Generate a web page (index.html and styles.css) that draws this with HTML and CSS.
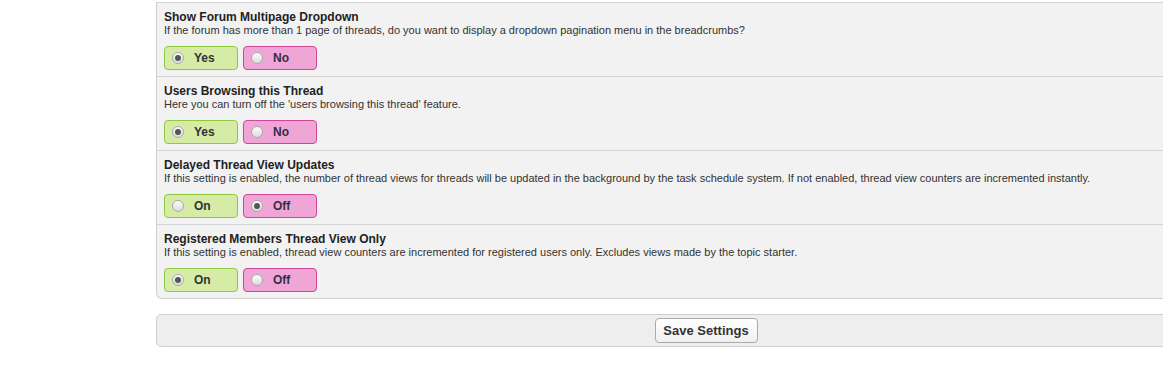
FILE: index.html
```html
<!DOCTYPE html>
<html lang="en">
<head>
    <meta charset="UTF-8">
    <title>Thread Settings</title>
    <link rel="stylesheet" href="styles.css">
</head>
<body>
<div class="page">
    <div class="settings">
        <div class="setting">
            <div class="title">Show Forum Multipage Dropdown</div>
            <div class="desc">If the forum has more than 1 page of threads, do you want to display a dropdown pagination menu in the breadcrumbs?</div>
            <div class="choices">
                <label class="choice yes"><span class="radio checked"></span>Yes</label>
                <label class="choice no"><span class="radio"></span>No</label>
            </div>
        </div>
        <div class="setting">
            <div class="title">Users Browsing this Thread</div>
            <div class="desc">Here you can turn off the 'users browsing this thread' feature.</div>
            <div class="choices">
                <label class="choice yes"><span class="radio checked"></span>Yes</label>
                <label class="choice no"><span class="radio"></span>No</label>
            </div>
        </div>
        <div class="setting">
            <div class="title">Delayed Thread View Updates</div>
            <div class="desc">If this setting is enabled, the number of thread views for threads will be updated in the background by the task schedule system. If not enabled, thread view counters are incremented instantly.</div>
            <div class="choices">
                <label class="choice yes"><span class="radio"></span>On</label>
                <label class="choice no"><span class="radio checked"></span>Off</label>
            </div>
        </div>
        <div class="setting">
            <div class="title">Registered Members Thread View Only</div>
            <div class="desc">If this setting is enabled, thread view counters are incremented for registered users only. Excludes views made by the topic starter.</div>
            <div class="choices">
                <label class="choice yes"><span class="radio checked"></span>On</label>
                <label class="choice no"><span class="radio"></span>Off</label>
            </div>
        </div>
    </div>

    <div class="submit-bar">
        <button class="save">Save Settings</button>
    </div>
</div>
</body>
</html>
```

FILE: styles.css
```css
html, body {
    margin: 0;
    overflow: hidden;
    background: #fff;
    font-family: "Liberation Sans", Arial, sans-serif;
}
.page {
    padding: 2px 0 0 156px;
    width: 1100px;
}
.settings {
    background-color: #f2f2f2;
    border-left: 1px solid #cfcfcf;
    border-bottom: 1px solid #cfcfcf;
    border-bottom-left-radius: 6px;
}
.setting {
    border-top: 1px solid #d4d4d4;
    padding: 7px 7px 6px 7px;
}
.title {
    font-size: 12px;
    font-weight: bold;
    line-height: 14px;
    color: #222;
}
.desc {
    font-size: 11px;
    line-height: 13px;
    color: #333;
}
.choices {
    display: flex;
    gap: 5px;
    margin-top: 9px;
}
.choice {
    display: flex;
    align-items: center;
    box-sizing: border-box;
    width: 74px;
    height: 24px;
    padding-left: 7px;
    border-radius: 4px;
    font-size: 12px;
    font-weight: bold;
    color: #333;
}
.choice.yes {
    background-color: #d6eca6;
    border: 1px solid #8dc93e;
}
.choice.no {
    background-color: #efa6d6;
    border: 1px solid #d0479a;
    color: #2f2f45;
}
.radio {
    display: inline-block;
    box-sizing: border-box;
    width: 12px;
    height: 12px;
    margin-right: 10px;
    border-radius: 50%;
    border: 1px solid #a9a9a9;
    background: linear-gradient(#fdfdfd, #dcdcdc);
    position: relative;
}
.radio.checked::after {
    content: "";
    position: absolute;
    left: 2px;
    top: 2px;
    width: 6px;
    height: 6px;
    border-radius: 50%;
    background: #555;
}
.submit-bar {
    margin-top: 15px;
    height: 31px;
    background-color: #eee;
    border: 1px solid #cfcfcf;
    border-radius: 5px;
    display: flex;
    justify-content: center;
    align-items: center;
}
.save {
    width: 103px;
    height: 25px;
    padding: 0;
    font-family: "Liberation Sans", Arial, sans-serif;
    font-size: 13px;
    font-weight: bold;
    color: #333;
    background: linear-gradient(#ffffff, #f0f0f0);
    border: 1px solid #aaa;
    border-radius: 4px;
}
```
